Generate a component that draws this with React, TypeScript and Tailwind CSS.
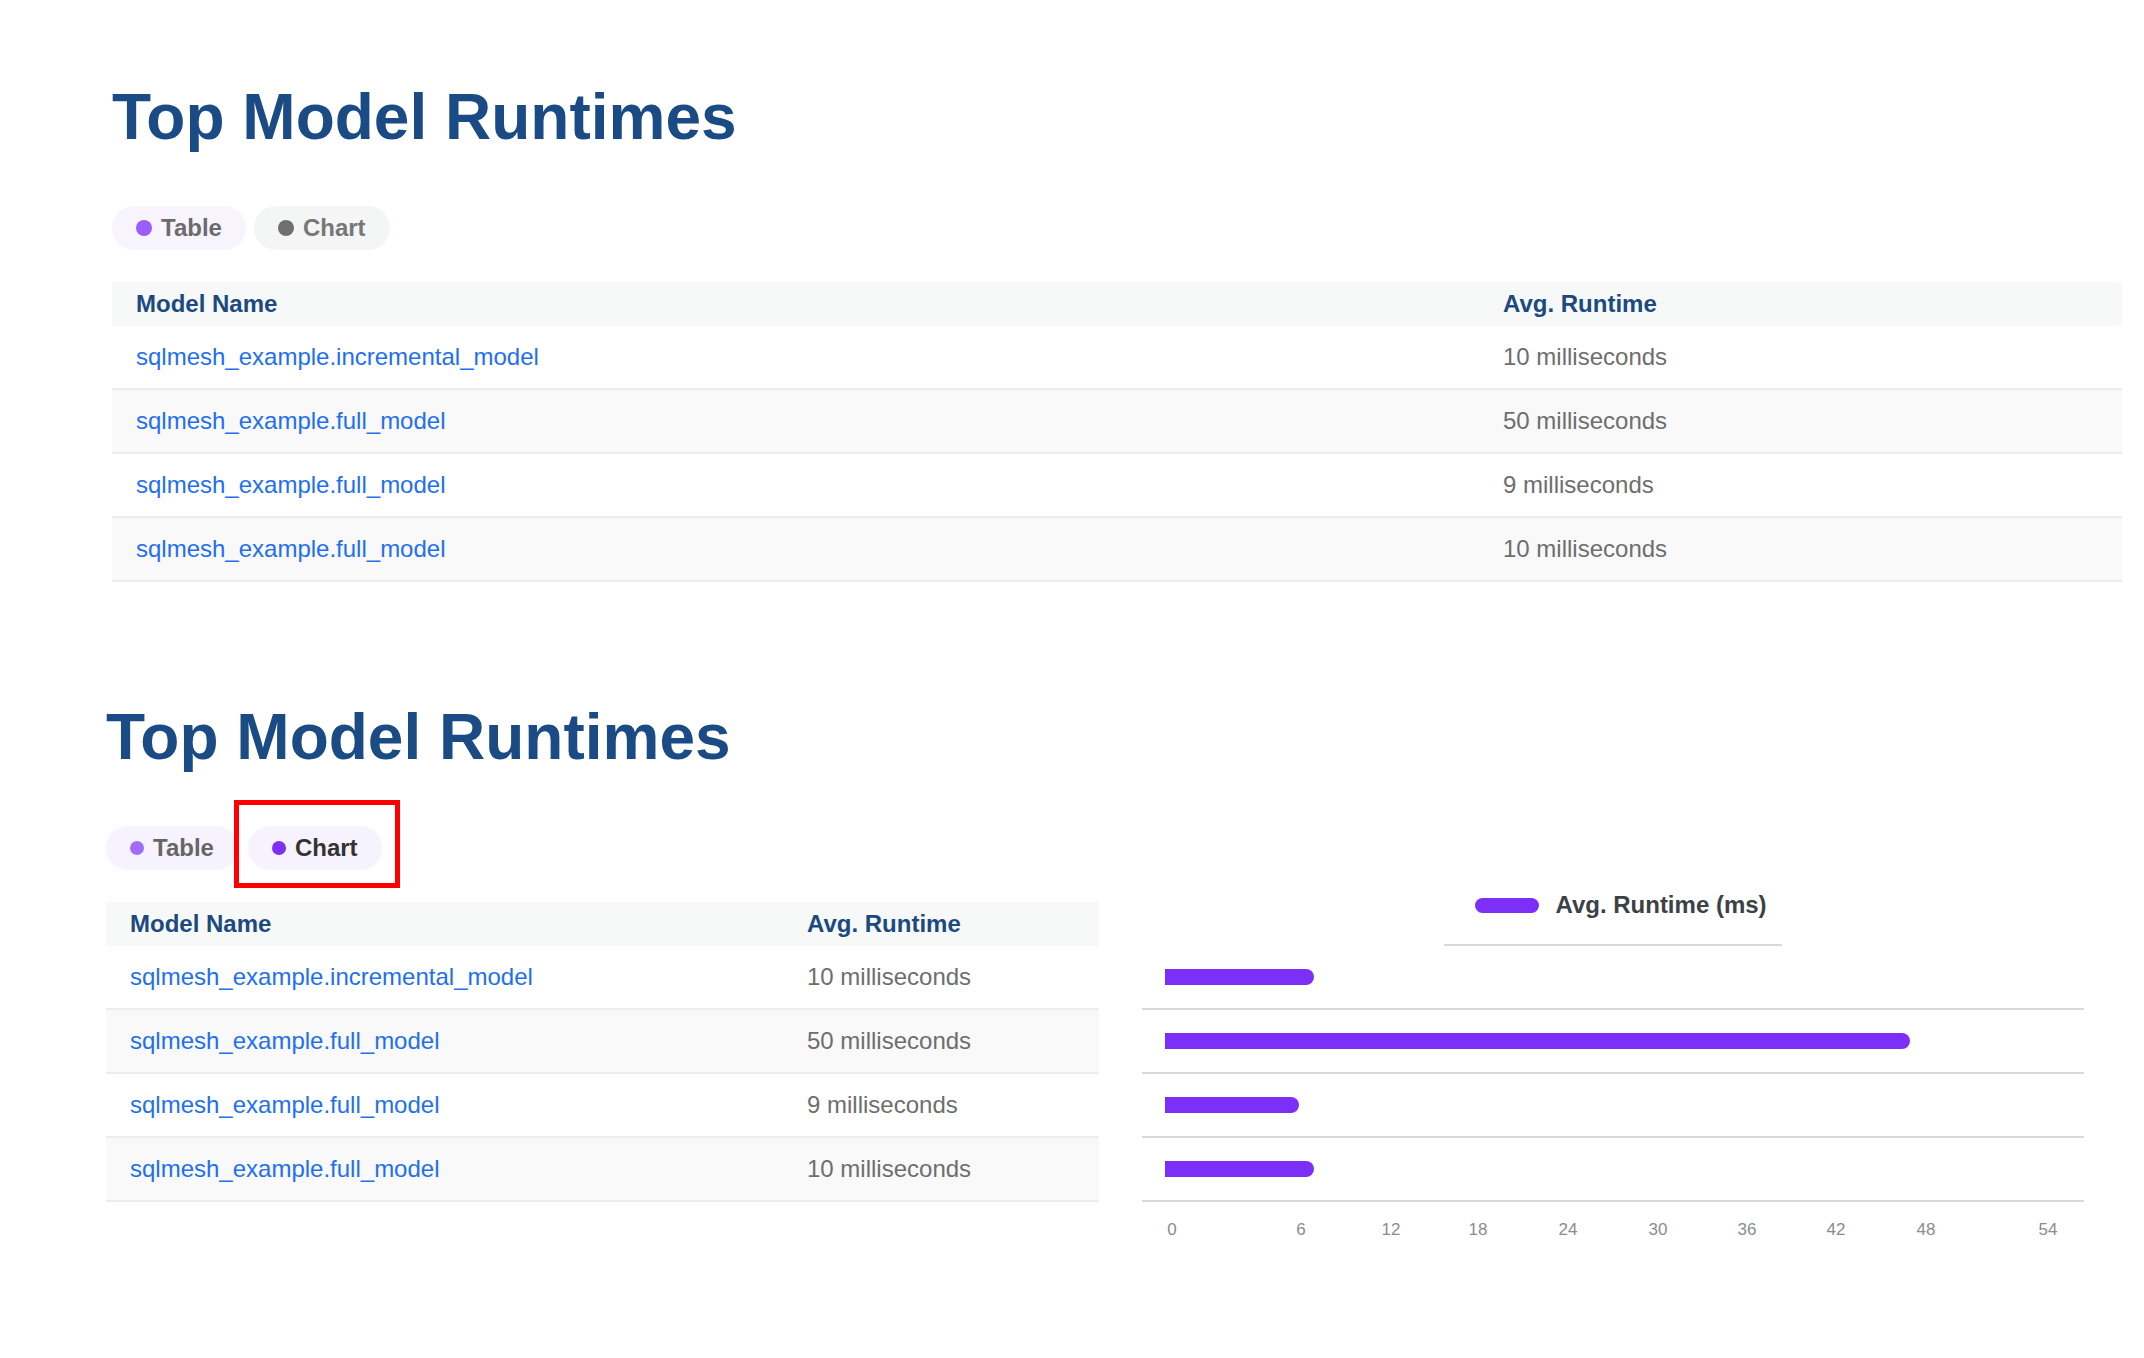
import React from "react";

type Row = { name: string; ms: number };

const rows: Row[] = [
  { name: "sqlmesh_example.incremental_model", ms: 10 },
  { name: "sqlmesh_example.full_model", ms: 50 },
  { name: "sqlmesh_example.full_model", ms: 9 },
  { name: "sqlmesh_example.full_model", ms: 10 },
];

// tick label centres, measured from the chart's left edge
const ticks = [
  { label: "0", x: 30 },
  { label: "6", x: 159 },
  { label: "12", x: 249 },
  { label: "18", x: 336 },
  { label: "24", x: 426 },
  { label: "30", x: 516 },
  { label: "36", x: 605 },
  { label: "42", x: 694 },
  { label: "48", x: 784 },
  { label: "54", x: 906 },
];

function Chip({
  label,
  bg,
  dot,
  text,
}: {
  label: string;
  bg: string;
  dot: string;
  text: string;
}) {
  return (
    <div className={`flex h-[44px] items-center gap-[9px] rounded-full px-6 ${bg}`}>
      <span className={`rounded-full ${dot}`} />
      <span className={`text-[24px] font-bold leading-none ${text}`}>{label}</span>
    </div>
  );
}

function RuntimeTable({ width, firstCol }: { width: string; firstCol: string }) {
  return (
    <div className={width}>
      <div className="flex h-[44px] items-center bg-[#f7f8f8] text-[24px] font-bold text-[#1c4a80]">
        <div className={`${firstCol} shrink-0 pl-6`}>Model Name</div>
        <div className="pl-6">Avg. Runtime</div>
      </div>
      {rows.map((r, i) => (
        <div
          key={i}
          className={`flex h-[64px] items-center border-b-2 border-[#ececec] text-[24px] ${
            i % 2 ? "bg-[#f9f9f9]" : "bg-white"
          }`}
        >
          <div className={`${firstCol} shrink-0 pl-6 text-[#1f6ff2]`}>{r.name}</div>
          <div className="pl-6 text-[#6e6e6e]">{r.ms} milliseconds</div>
        </div>
      ))}
    </div>
  );
}

function RuntimeChart() {
  return (
    <div className="-mt-[9px] w-[942px]">
      {/* Legend */}
      <div className="flex justify-center">
        <div className="flex items-center gap-4 pl-4">
          <span className="h-[15px] w-[64px] rounded-full bg-[#7b2ff7]" />
          <span className="text-[24px] font-bold leading-6 text-[#3c4146]">Avg. Runtime (ms)</span>
        </div>
      </div>
      <div className="mx-auto mt-[27px] h-[2px] w-[338px] bg-[#d5d9d9]" />

      {/* Bars */}
      {rows.map((r, i) => (
        <div key={i} className="flex h-[64px] items-center border-b-2 border-[#d5dada] pl-[23px]">
          <div className="h-[16px] rounded-r-full bg-[#7b2ff7]" style={{ width: r.ms * 14.9 }} />
        </div>
      ))}

      {/* Axis */}
      <svg width="942" height="40" className="block">
        {ticks.map((t) => (
          <text
            key={t.label}
            x={t.x}
            y="33"
            textAnchor="middle"
            fontSize="17"
            fill="#8c8c8c"
            fontFamily="Liberation Sans, Arial, sans-serif"
          >
            {t.label}
          </text>
        ))}
      </svg>
    </div>
  );
}

export default function App() {
  return (
    <div className="min-h-[1358px] bg-white pb-20 font-['Liberation_Sans',Arial,sans-serif]">
      {/* Table view */}
      <section className="pl-[112px] pt-[85px]">
        <h1 className="text-[64px] font-bold leading-none text-[#1a4b84]">Top Model Runtimes</h1>
        <div className="mt-[57px] flex gap-2">
          <Chip label="Table" bg="bg-[#f7f4fe]" dot="h-[16px] w-[16px] bg-[#9d5cfa]" text="text-[#6b6b6b]" />
          <Chip label="Chart" bg="bg-[#f4f5f5]" dot="h-[16px] w-[16px] bg-[#6f6f6f]" text="text-[#777777]" />
        </div>
        <div className="mt-8">
          <RuntimeTable width="w-[2010px]" firstCol="w-[1367px]" />
        </div>
      </section>

      {/* Chart view */}
      <section className="mt-[123px] pl-[106px]">
        <h1 className="text-[64px] font-bold leading-none text-[#1a4b84]">Top Model Runtimes</h1>
        <div className="relative mt-[57px] flex gap-[10px]">
          <Chip label="Table" bg="bg-[#f6f3fe]" dot="h-[14px] w-[14px] bg-[#a06cf9]" text="text-[#666666]" />
          <Chip label="Chart" bg="bg-[#f6f3fe]" dot="h-[14px] w-[14px] bg-[#7b2ff7]" text="text-[#333333]" />
          <div className="absolute left-[128px] top-[-26px] h-[88px] w-[166px] border-[5px] border-[#ff0000]" />
        </div>
        <div className="mt-8 flex items-start gap-[43px]">
          <RuntimeTable width="w-[993px]" firstCol="w-[677px]" />
          <RuntimeChart />
        </div>
      </section>
    </div>
  );
}
